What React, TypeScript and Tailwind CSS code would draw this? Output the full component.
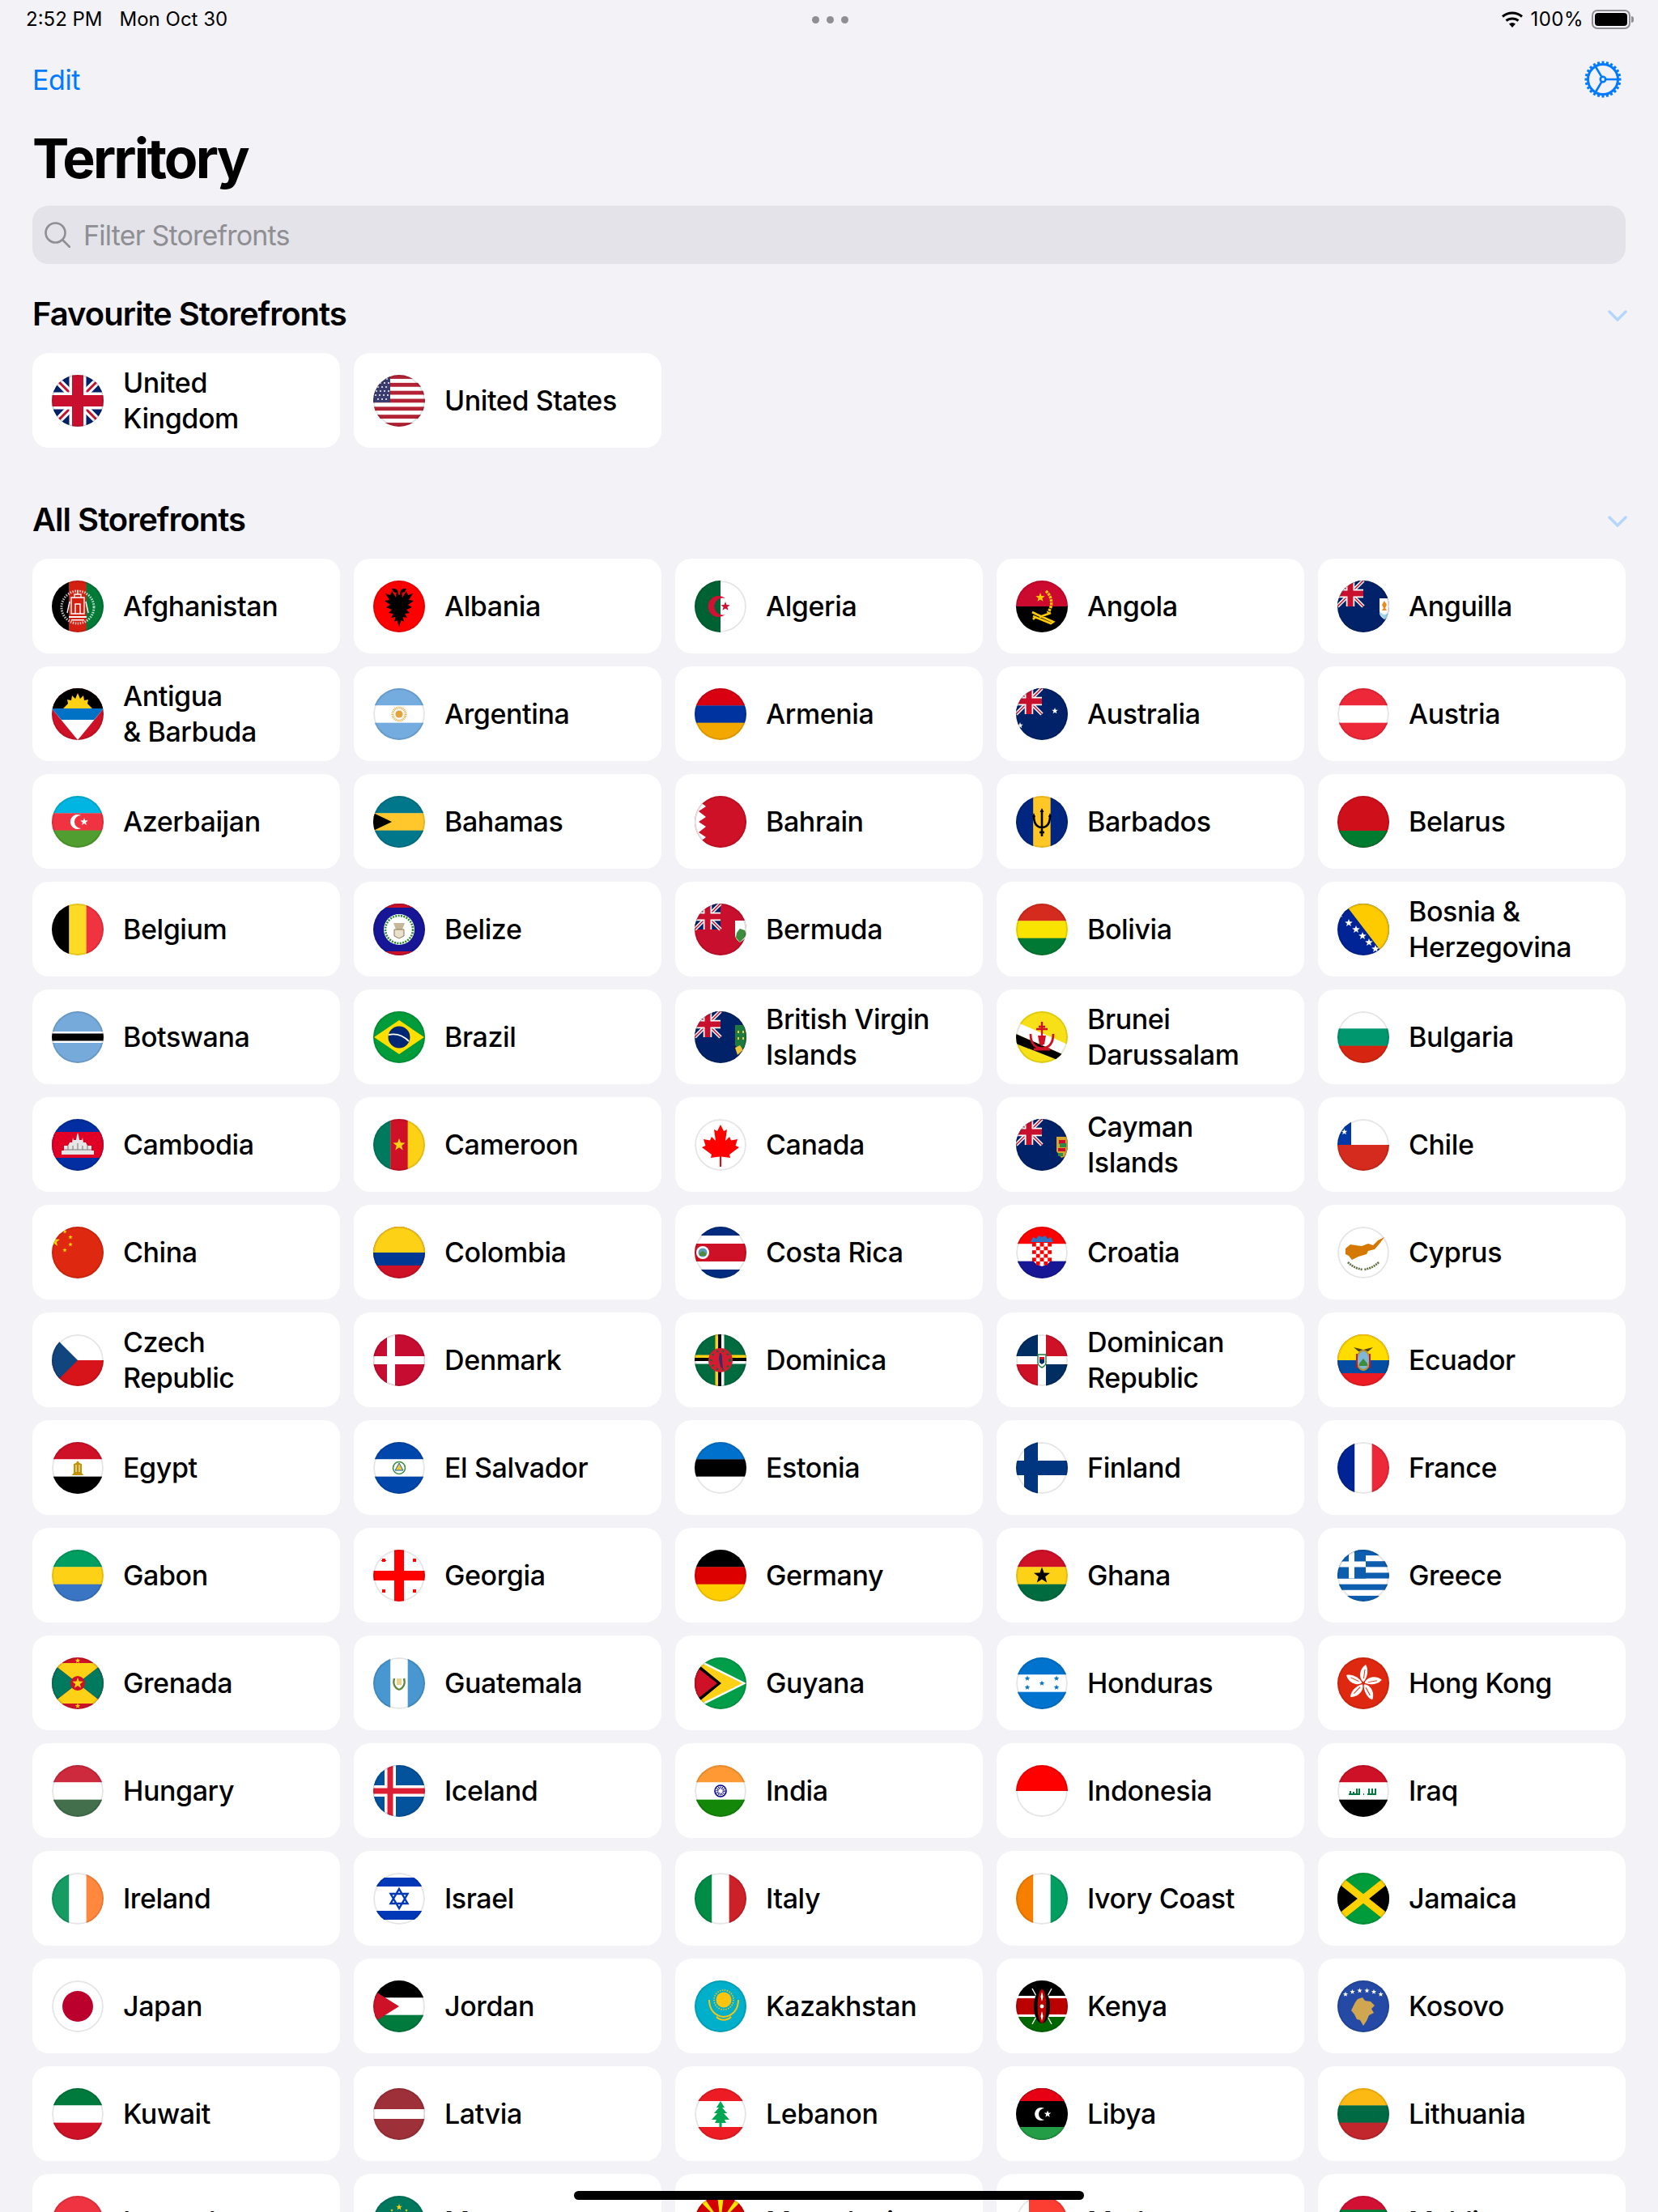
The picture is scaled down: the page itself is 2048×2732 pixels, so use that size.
import type { ReactNode } from "react";

// ---- flag drawing helpers (all flags live in a 64x64 box) ----

const H = (...c: string[]) =>
  c.map((f, i) => <rect key={i} x="0" y={(i * 64) / c.length} width="64" height={64 / c.length + 0.3} fill={f} />);

const V = (...c: string[]) =>
  c.map((f, i) => <rect key={i} y="0" x={(i * 64) / c.length} height="64" width={64 / c.length + 0.3} fill={f} />);

const Bg = ({ c }: { c: string }) => <rect width="64" height="64" fill={c} />;

function Star({ x, y, r, fill = "#fff" }: { x: number; y: number; r: number; fill?: string }) {
  const pts = Array.from({ length: 10 }, (_, i) => {
    const a = -Math.PI / 2 + (i * Math.PI) / 5;
    const d = i % 2 === 0 ? r : r * 0.42;
    return `${(x + d * Math.cos(a)).toFixed(2)},${(y + d * Math.sin(a)).toFixed(2)}`;
  });
  return <polygon points={pts.join(" ")} fill={fill} />;
}

const Jack = () => (
  <>
    <Bg c="#012169" />
    <path d="M0 0L64 64M64 0L0 64" stroke="#fff" strokeWidth="9" />
    <path d="M0 0L64 64M64 0L0 64" stroke="#c8102e" strokeWidth="3" />
    <path d="M32 0V64M0 32H64" stroke="#fff" strokeWidth="21" />
    <path d="M32 0V64M0 32H64" stroke="#c8102e" strokeWidth="14" />
  </>
);

const Canton = () => (
  <g transform="scale(.5)">
    <Jack />
  </g>
);

const Ensign = ({ children }: { children?: ReactNode }) => (
  <>
    <Bg c="#012169" />
    <Canton />
    {children}
  </>
);

// ---- data ----

const FAVOURITES: { name: string; flag: ReactNode }[] = [
  { name: "United\nKingdom", flag: <Jack /> },
  {
    name: "United States",
    flag: (
      <>
        {Array.from({ length: 13 }, (_, i) => (
          <rect key={i} y={(i * 64) / 13} width="64" height={64 / 13 + 0.2} fill={i % 2 === 0 ? "#b22234" : "#fff"} />
        ))}
        <rect width="21" height="34" fill="#3c3b6e" />
        {[
          [12, 5], [17, 5], [9, 10], [14, 10], [19, 10], [6, 15], [11, 15], [16, 15], [4, 20], [9, 20], [14, 20], [19, 20],
          [3, 25], [8, 25], [13, 25], [18, 25], [6, 30], [11, 30], [16, 30],
        ].map(([x, y]) => (
          <circle key={`${x}-${y}`} cx={x} cy={y} r="1" fill="#fff" />
        ))}
      </>
    ),
  },
];

const STOREFRONTS: { name: string; flag: ReactNode }[] = [
  {
    name: "Afghanistan",
    flag: (
      <>
        {V("#000", "#d32011", "#007a36")}
        <circle cx="32" cy="33" r="20" fill="none" stroke="#fff" strokeOpacity=".75" strokeWidth="3" strokeDasharray="1.5 1.5" />
        <path d="M24 21h16v20H24z" fill="none" stroke="#fff" strokeWidth="1.4" />
        <path d="M28 21v-4h8v4M32 17v-5M29 41V29h6v12M22 26l-3 14M42 26l3 14" fill="none" stroke="#fff" strokeWidth="1.4" />
        <path d="M21 44h22v2H21zM24 48h16v1.5H24z" fill="#fff" />
      </>
    ),
  },
  {
    name: "Albania",
    flag: (
      <>
        <Bg c="#ff0000" />
        <path
          d="M32 57L29.500 49L26 51L27.500 45L22 46L25 41L19 40L23 36L16 33L21 30L14 25L20 24L15 16L21 18L23 13L28 21L28.500 15L25 14L23 10L27 10L30 12L31.500 18L32.500 18L34 12L37 10L41 10L39 14L35.500 15L36 21L41 13L43 18L49 16L44 24L50 25L43 30L48 33L41 36L45 40L39 41L42 46L36.500 45L38 51L34.500 49Z"
          fill="#000"
        />
      </>
    ),
  },
  {
    name: "Algeria",
    flag: (
      <>
        <Bg c="#fff" />
        <rect width="32" height="64" fill="#006233" />
        <path d="M38 22A13 13 0 1 0 38 42A10.5 10.5 0 1 1 38 22Z" fill="#d21034" />
        <Star x={38} y={32} r={6} fill="#d21034" />
      </>
    ),
  },
  {
    name: "Angola",
    flag: (
      <>
        {H("#cc092f", "#000")}
        <path d="M37 13A19 19 0 0 1 39 40" fill="none" stroke="#ffcb00" strokeWidth="3.5" strokeDasharray="3 1" />
        <Star x={30} y={21} r={6} fill="#ffcb00" />
        <path d="M20 39l6 3 20 9-3 2-22-9M24 45l-3 3M43 40l-14 5" fill="none" stroke="#ffcb00" strokeWidth="2.6" />
      </>
    ),
  },
  {
    name: "Anguilla",
    flag: (
      <Ensign>
        <path d="M52 22h12v20c-2 3-4 5-6 6-3-2-6-5-6-8z" fill="#fff" />
        <path d="M52 38c2 2 4 4 6 4s4-1 6-3v3l-6 6-6-7z" fill="#9fd3ee" />
        <path d="M58 25l3 5-2 4 2 3h-6l2-3-2-4z" fill="#f08a1d" />
      </Ensign>
    ),
  },
  {
    name: "Antigua\n& Barbuda",
    flag: (
      <>
        <Bg c="#ce1126" />
        <polygon points="0,25 64,25 32,64" fill="#fff" />
        <polygon points="0,25 64,25 52.3,39 11.7,39" fill="#0072c6" />
        <rect width="64" height="25" fill="#000" />
        <path d="M14 25L20 19L19 14L24 15L25 9L29 13L32 6L35 13L39 9L40 15L45 14L44 19L50 25Z" fill="#fcd116" />
      </>
    ),
  },
  {
    name: "Argentina",
    flag: (
      <>
        {H("#74acdf", "#fff", "#74acdf")}
        <circle cx="32" cy="32" r="8" fill="none" stroke="#e9a93b" strokeWidth="3" strokeDasharray="1 1" />
        <circle cx="32" cy="32" r="4.6" fill="#e3a23a" />
      </>
    ),
  },
  { name: "Armenia", flag: H("#d90012", "#0033a0", "#f2a800") },
  {
    name: "Australia",
    flag: (
      <Ensign>
        <Star x={48} y={28} r={4} />
        <Star x={5} y={46} r={4} />
      </Ensign>
    ),
  },
  { name: "Austria", flag: H("#ed2939", "#fff", "#ed2939") },
  {
    name: "Azerbaijan",
    flag: (
      <>
        {H("#00b5e2", "#ef3340", "#509e2f")}
        <path d="M36 24A9 9 0 1 0 36 40A7.5 7.5 0 1 1 36 24Z" fill="#fff" />
        <Star x={40} y={32} r={5} />
      </>
    ),
  },
  {
    name: "Bahamas",
    flag: (
      <>
        {H("#00778b", "#ffc72c", "#00778b")}
        <polygon points="0,21 23,32 0,43" fill="#000" />
      </>
    ),
  },
  {
    name: "Bahrain",
    flag: (
      <>
        <Bg c="#ce1126" />
        <polygon points="0,0 14,0 5,6 14,13 5,19 14,26 5,32 14,38 5,45 14,51 5,58 14,64 0,64" fill="#fff" />
      </>
    ),
  },
  {
    name: "Barbados",
    flag: (
      <>
        {V("#00267f", "#ffc726", "#00267f")}
        <path d="M32 18v32M22 24c0 10 3 15 10 15s10-5 10-15M29 45h6" fill="none" stroke="#000" strokeWidth="2.6" />
        <path d="M32 15l-2.5 5h5zM22 21l-2 5h4zM42 21l-2 5h4z" fill="#000" />
      </>
    ),
  },
  {
    name: "Belarus",
    flag: (
      <>
        <Bg c="#cf101a" />
        <rect y="43" width="64" height="21" fill="#007c30" />
      </>
    ),
  },
  { name: "Belgium", flag: V("#000", "#fdda24", "#ef3340") },
  {
    name: "Belize",
    flag: (
      <>
        <Bg c="#171696" />
        <rect width="64" height="5" fill="#ce1126" />
        <rect y="59" width="64" height="5" fill="#ce1126" />
        <circle cx="32" cy="32" r="19" fill="#fff" />
        <circle cx="32" cy="32" r="17" fill="none" stroke="#2d8a2f" strokeWidth="2.6" strokeDasharray="2 1.4" />
        <path d="M25 24h14l-3 8h-8z" fill="#c6b79a" />
        <path d="M26 32h12v8l-6 3-6-3z" fill="#e9e1cc" stroke="#8b7a55" strokeWidth="1" />
      </>
    ),
  },
  {
    name: "Bermuda",
    flag: (
      <>
        <Bg c="#c8102e" />
        <Canton />
        <path d="M50 21h14v21l-8 6c-4-3-6-6-6-9z" fill="#fff" />
        <path d="M52 36l4-5 6 2 2 6-8 9-5-6z" fill="#3c8d3c" />
      </>
    ),
  },
  { name: "Bolivia", flag: H("#d52b1e", "#f9e300", "#007934") },
  {
    name: "Bosnia &\nHerzegovina",
    flag: (
      <>
        <Bg c="#002395" />
        <polygon points="9,0 64,0 64,64 58,64" fill="#fecb00" />
        {[[3, 13], [14, 24], [23, 32], [31, 40], [39, 48], [47, 56]].map(([x, y]) => (
          <Star key={x} x={x} y={y} r={5} />
        ))}
      </>
    ),
  },
  {
    name: "Botswana",
    flag: (
      <>
        <Bg c="#75aadb" />
        <rect y="25" width="64" height="14" fill="#fff" />
        <rect y="27.5" width="64" height="9" fill="#000" />
      </>
    ),
  },
  {
    name: "Brazil",
    flag: (
      <>
        <Bg c="#009b3a" />
        <polygon points="1,32 32,11 63,32 32,53" fill="#fedf00" />
        <circle cx="32" cy="32" r="13.5" fill="#002776" />
        <path d="M19 29c9-2 18 1 25 8" fill="none" stroke="#fff" strokeWidth="1.8" />
      </>
    ),
  },
  {
    name: "British Virgin\nIslands",
    flag: (
      <Ensign>
        <path d="M50 17h14v25l-7 7-7-7z" fill="#1f7a3d" />
        <path d="M53 24h2v3h-2zM59 24h2v3h-2zM53 32h2v3h-2zM59 32h2v3h-2zM50 45l6-3 4 6-7 6z" fill="#f0c63a" />
      </Ensign>
    ),
  },
  {
    name: "Brunei\nDarussalam",
    flag: (
      <>
        <Bg c="#f7e017" />
        <polygon points="0,13 0,28 64,56 64,41" fill="#fff" />
        <polygon points="0,28 0,40 64,65 64,56" fill="#000" />
        <path d="M32 13v30M25 22h14M28 19h8" fill="none" stroke="#cf1126" strokeWidth="2.4" />
        <path d="M18 28c0 10 4 17 14 18 10-1 14-8 14-18M22 47h20" fill="none" stroke="#cf1126" strokeWidth="2.8" />
        <path d="M27 30h10l-2 11h-6z" fill="#cf1126" />
      </>
    ),
  },
  { name: "Bulgaria", flag: H("#fff", "#00966e", "#d62612") },
  {
    name: "Cambodia",
    flag: (
      <>
        <rect width="64" height="64" fill="#032ea1" />
        <rect y="16" width="64" height="32" fill="#e00025" />
        <path d="M12 44h40v-5h-3v-6h-5l-2-4h-3l-1-6-1 3h-3l-1-6-1-3-1 3-1 6h-3l-1-3-1 6h-3l-2 4h-5v6h-3z" fill="#e6e6e6" />
        <path d="M15 38h34M20 33v5M26 33v5M32 30v8M38 33v5M44 33v5" stroke="#777" strokeWidth="1" />
      </>
    ),
  },
  {
    name: "Cameroon",
    flag: (
      <>
        {V("#007a5e", "#ce1126", "#fcd116")}
        <Star x={32} y={32} r={8} fill="#fcd116" />
      </>
    ),
  },
  {
    name: "Canada",
    flag: (
      <>
        <Bg c="#fff" />
        <polygon
          points="32,7 36,15 40,13 38,27 43,22 45,26.5 53,25 50.5,33 55,35 43,44 44,48 33,46.5 33,59 31,59 31,46.5 20,48 21,44 9,35 13.5,33 11,25 19,26.5 21,22 26,27 24,13 28,15"
          fill="#ff0000"
        />
      </>
    ),
  },
  {
    name: "Cayman\nIslands",
    flag: (
      <Ensign>
        <path d="M50 22h14v14l-2 10-6 2-6-8z" fill="#d8a52d" />
        <path d="M53 26h8v5h-8zM52 36h9v4h-9z" fill="#c8102e" />
        <path d="M54 30h8v5h-8zM52 42h6v4h-6z" fill="#2a8b4a" />
      </Ensign>
    ),
  },
  {
    name: "Chile",
    flag: (
      <>
        <Bg c="#fff" />
        <rect y="32" width="64" height="32" fill="#d52b1e" />
        <rect width="17" height="32" fill="#0039a6" />
        <Star x={8.5} y={16} r={4} />
      </>
    ),
  },
  {
    name: "China",
    flag: (
      <>
        <Bg c="#de2910" />
        <Star x={3} y={18} r={7} fill="#ffde00" />
        <Star x={16} y={6} r={2.8} fill="#ffde00" />
        <Star x={23} y={13} r={2.8} fill="#ffde00" />
        <Star x={23} y={22} r={2.8} fill="#ffde00" />
        <Star x={16} y={29} r={2.8} fill="#ffde00" />
      </>
    ),
  },
  {
    name: "Colombia",
    flag: (
      <>
        <Bg c="#ce1126" />
        <rect width="64" height="32" fill="#fcd116" />
        <rect y="32" width="64" height="16" fill="#003893" />
      </>
    ),
  },
  {
    name: "Costa Rica",
    flag: (
      <>
        <Bg c="#fff" />
        <rect width="64" height="11" fill="#002b7f" />
        <rect y="53" width="64" height="11" fill="#002b7f" />
        <rect y="21" width="64" height="22" fill="#ce1126" />
        <circle cx="10" cy="32" r="8" fill="#fff" />
        <circle cx="10" cy="32" r="5.5" fill="#5b9bb5" />
        <path d="M6 33l4-3 4 3v3H6z" fill="#4d8a3f" />
      </>
    ),
  },
  {
    name: "Croatia",
    flag: (
      <>
        {H("#ff0000", "#fff", "#171796")}
        <path d="M18 19l3-6 4 2 3-4 4 2 4-2 3 4 4-2 3 6z" fill="#2d74c4" />
        <path d="M20 20h24v17c0 7-6 10-12 12-6-2-12-5-12-12z" fill="#fff" />
        {[0, 1, 2, 3, 4, 5].map((r) =>
          [0, 1, 2, 3, 4].map((c) =>
            (r + c) % 2 === 0 ? (
              <rect key={`${r}${c}`} x={20 + c * 4.8} y={20 + r * 4.6} width="4.8" height="4.6" fill="#f00" />
            ) : null
          )
        )}
      </>
    ),
  },
  {
    name: "Cyprus",
    flag: (
      <>
        <Bg c="#fff" />
        <path d="M10 27L16 22L22 23L30 24L38 21L44 23L50 17L58 13L52 21L46 28L38 30L36 34L26 37L18 41L14 36L10 34Z" fill="#d57800" />
        <path d="M13 44c6 6 12 8 18 9M51 44c-6 6-12 8-18 9" fill="none" stroke="#5f6f3f" strokeWidth="2.6" strokeDasharray="2 1" />
      </>
    ),
  },
  {
    name: "Czech\nRepublic",
    flag: (
      <>
        <Bg c="#fff" />
        <rect y="32" width="64" height="32" fill="#d7141a" />
        <polygon points="0,0 32,32 0,64" fill="#11457e" />
      </>
    ),
  },
  {
    name: "Denmark",
    flag: (
      <>
        <Bg c="#c60c30" />
        <path d="M17 0h10v64H17zM0 27h64v10H0z" fill="#fff" />
      </>
    ),
  },
  {
    name: "Dominica",
    flag: (
      <>
        <Bg c="#006b3f" />
        <path d="M25.5 0h3.500v64h-3.500zM0 25.500h64v3.500H0z" fill="#fcd116" />
        <path d="M29 0h4v64h-4zM0 29h64v4H0z" fill="#000" />
        <path d="M33 0h3.500v64H33zM0 33h64v3.500H0z" fill="#fff" />
        <circle cx="32" cy="32" r="15" fill="#d41c30" />
        <circle cx="32" cy="32" r="11.500" fill="none" stroke="#006b3f" strokeWidth="2.400" strokeDasharray="2 5" />
        <path d="M31 23c3 0 3 4 3 8l1 12-3-3-2-10z" fill="#3b2a6b" />
      </>
    ),
  },
  {
    name: "Dominican\nRepublic",
    flag: (
      <>
        <Bg c="#fff" />
        <rect width="27" height="27" fill="#002d62" />
        <rect x="37" width="27" height="27" fill="#ce1126" />
        <rect y="37" width="27" height="27" fill="#ce1126" />
        <rect x="37" y="37" width="27" height="27" fill="#002d62" />
        <path d="M27 25h10v10c0 3-3 5-5 6-2-1-5-3-5-6z" fill="#fff" stroke="#1f7a3d" strokeWidth="1.400" />
        <path d="M29 28h6v3h-6z" fill="#ce1126" />
        <path d="M29 31h6v4l-3 2-3-2z" fill="#002d62" />
      </>
    ),
  },
  {
    name: "Ecuador",
    flag: (
      <>
        <Bg c="#ed1c24" />
        <rect width="64" height="32" fill="#ffdd00" />
        <rect y="32" width="64" height="16" fill="#034ea2" />
        <path d="M20 16l12 3 12-3-6 5h-12z" fill="#4a3a28" />
        <ellipse cx="32" cy="32" rx="8" ry="12" fill="#7fb7d6" stroke="#b8932f" strokeWidth="2" />
        <path d="M27 36l5-6 5 6v3h-10z" fill="#3c8d3c" />
        <path d="M24 24v18M40 24v18" stroke="#c8102e" strokeWidth="1.800" />
      </>
    ),
  },
  { name: "Egypt", flag: <>{H("#ce1126", "#fff", "#000")}<path d="M32 23l2 3 3 1v11l2 3h-14l2-3V27l3-1z" fill="#c09300" /><path d="M30 28v9M34 28v9" stroke="#fff" strokeWidth="1" /></> },
  {
    name: "El Salvador",
    flag: (
      <>
        {H("#0047ab", "#fff", "#0047ab")}
        <circle cx="32" cy="32" r="7.500" fill="none" stroke="#3c8d3c" strokeWidth="1.600" />
        <polygon points="32,26 37,35 27,35" fill="#e9c93a" stroke="#1b5fa8" strokeWidth="1" />
      </>
    ),
  },
  { name: "Estonia", flag: H("#0072ce", "#000", "#fff") },
  {
    name: "Finland",
    flag: (
      <>
        <Bg c="#fff" />
        <path d="M10 0h17v64H10zM0 23h64v18H0z" fill="#003580" />
      </>
    ),
  },
  { name: "France", flag: V("#002395", "#fff", "#ed2939") },
  { name: "Gabon", flag: H("#009e60", "#fcd116", "#3a75c4") },
  {
    name: "Georgia",
    flag: (
      <>
        <Bg c="#fff" />
        <path d="M26 0h12v64H26zM0 26h64v12H0z" fill="#ff0000" />
        <path d="M11 11h4v4h-4zM10 13h6v1h-6zM49 11h4v4h-4zM11 49h4v4h-4zM49 49h4v4h-4z" fill="#ff0000" />
      </>
    ),
  },
  { name: "Germany", flag: H("#000", "#dd0000", "#ffce00") },
  {
    name: "Ghana",
    flag: (
      <>
        {H("#ce1126", "#fcd116", "#006b3f")}
        <Star x={32} y={32} r={10.500} fill="#000" />
      </>
    ),
  },
  {
    name: "Greece",
    flag: (
      <>
        <Bg c="#fff" />
        {[0, 2, 4, 6, 8].map((i) => (
          <rect key={i} y={(i * 64) / 9} width="64" height={64 / 9} fill="#0d5eaf" />
        ))}
        <rect width="35" height="35.500" fill="#0d5eaf" />
        <path d="M14 0h7v35.500h-7zM0 14.500h35v7H0z" fill="#fff" />
      </>
    ),
  },
  {
    name: "Grenada",
    flag: (
      <>
        <Bg c="#ce1126" />
        <polygon points="0,7 64,7 32,32" fill="#fcd116" />
        <polygon points="0,57 64,57 32,32" fill="#fcd116" />
        <polygon points="0,7 32,32 0,57" fill="#007a5e" />
        <polygon points="64,7 32,32 64,57" fill="#007a5e" />
        <circle cx="32" cy="32" r="9" fill="#ce1126" />
        <Star x={32} y={32} r={7} fill="#fcd116" />
        <Star x={32} y={4} r={3.400} fill="#fcd116" />
        <Star x={32} y={60} r={3.400} fill="#fcd116" />
      </>
    ),
  },
  {
    name: "Guatemala",
    flag: (
      <>
        {V("#4997d0", "#fff", "#4997d0")}
        <path d="M26 26c-2 7 1 12 6 14M38 26c2 7-1 12-6 14" fill="none" stroke="#5b8a3a" strokeWidth="2.400" />
        <rect x="29" y="26" width="6" height="8" fill="#e8d690" />
      </>
    ),
  },
  {
    name: "Guyana",
    flag: (
      <>
        <Bg c="#009e49" />
        <polygon points="0,0 64,32 0,64" fill="#fff" />
        <polygon points="0,3 59,32 0,61" fill="#fcd116" />
        <polygon points="0,5 33,32 0,59" fill="#000" />
        <polygon points="0,10 28,32 0,54" fill="#ce1126" />
      </>
    ),
  },
  {
    name: "Honduras",
    flag: (
      <>
        {H("#0073cf", "#fff", "#0073cf")}
        {[[32, 32], [14, 26], [14, 37], [50, 26], [50, 37]].map(([x, y]) => (
          <Star key={`${x}${y}`} x={x} y={y} r={3.500} fill="#0073cf" />
        ))}
      </>
    ),
  },
  {
    name: "Hong Kong",
    flag: (
      <>
        <Bg c="#de2910" />
        {[0, 72, 144, 216, 288].map((a) => (
          <g key={a} transform={`rotate(${a} 32 32)`}>
            <path d="M31.500 30C26 25 27 14 35 9C39 15 37 25 32.500 30Z" fill="#fff" />
            <path d="M34 15L32.500 26" stroke="#de2910" strokeWidth="1" />
          </g>
        ))}
      </>
    ),
  },
  { name: "Hungary", flag: H("#cd2a3e", "#fff", "#436f4d") },
  {
    name: "Iceland",
    flag: (
      <>
        <Bg c="#02529c" />
        <path d="M14 0h14v64H14zM0 25h64v14H0z" fill="#fff" />
        <path d="M17.500 0h7v64h-7zM0 28.500h64v7H0z" fill="#dc1e35" />
      </>
    ),
  },
  {
    name: "India",
    flag: (
      <>
        {H("#ff9933", "#fff", "#138808")}
        <circle cx="32" cy="32" r="7" fill="none" stroke="#000088" strokeWidth="1.600" />
        <circle cx="32" cy="32" r="4" fill="none" stroke="#000088" strokeWidth="3" strokeDasharray="1 1" />
      </>
    ),
  },
  {
    name: "Indonesia",
    flag: (
      <>
        <Bg c="#fff" />
        <rect width="64" height="32" fill="#ff0000" />
      </>
    ),
  },
  {
    name: "Iraq",
    flag: (
      <>
        {H("#ce1126", "#fff", "#000")}
        <path d="M14 36h14M16 36v-4M20 36v-3M24 36v-7M27 36v-7M32 36h1M37 36h11M39 36v-7M43 36v-7M47 36v-7" fill="none" stroke="#007a3d" strokeWidth="2" />
      </>
    ),
  },
  { name: "Ireland", flag: V("#169b62", "#fff", "#ff883e") },
  {
    name: "Israel",
    flag: (
      <>
        <Bg c="#fff" />
        <rect y="6" width="64" height="11" fill="#0038b8" />
        <rect y="47" width="64" height="11" fill="#0038b8" />
        <path d="M32 20L42.500 38H21.500ZM32 44L21.500 26H42.500Z" fill="none" stroke="#0038b8" strokeWidth="2.400" />
      </>
    ),
  },
  { name: "Italy", flag: V("#008c45", "#fff", "#cd212a") },
  { name: "Ivory Coast", flag: V("#f77f00", "#fff", "#009e60") },
  {
    name: "Jamaica",
    flag: (
      <>
        <Bg c="#009b3a" />
        <polygon points="0,8 26,32 0,56" fill="#000" />
        <polygon points="64,8 38,32 64,56" fill="#000" />
        <path d="M-2 5L66 59M66 5L-2 59" stroke="#fed100" strokeWidth="9" />
      </>
    ),
  },
  {
    name: "Japan",
    flag: (
      <>
        <Bg c="#fff" />
        <circle cx="32" cy="32" r="19" fill="#bc002d" />
      </>
    ),
  },
  {
    name: "Jordan",
    flag: (
      <>
        {H("#000", "#fff", "#007a3d")}
        <polygon points="0,12 32,32 0,52" fill="#ce1126" />
      </>
    ),
  },
  {
    name: "Kazakhstan",
    flag: (
      <>
        <Bg c="#00afca" />
        <circle cx="36" cy="24" r="9.500" fill="#fec50c" />
        <circle cx="36" cy="24" r="12" fill="none" stroke="#fec50c" strokeWidth="1.600" strokeDasharray="1.500 1.500" />
        <path d="M18 24c0 12 7 20 18 21M54 24c0 12-7 20-18 21M27 45c5 5 13 5 18 0" fill="none" stroke="#fec50c" strokeWidth="2" />
      </>
    ),
  },
  {
    name: "Kenya",
    flag: (
      <>
        <Bg c="#fff" />
        <rect width="64" height="19" fill="#000" />
        <rect y="22" width="64" height="20" fill="#bb0000" />
        <rect y="45" width="64" height="19" fill="#006600" />
        <path d="M20 10L44 54M44 10L20 54" stroke="#fff" strokeWidth="1.400" />
        <ellipse cx="32" cy="32" rx="10" ry="21" fill="#000" />
        <ellipse cx="32" cy="32" rx="5.500" ry="21" fill="#bb0000" />
        <path d="M32 14l1.500 6-1.500 6-1.500-6zM32 38l1.500 6-1.500 6-1.500-6z" fill="#fff" />
        <circle cx="32" cy="32" r="2.400" fill="#fff" />
      </>
    ),
  },
  {
    name: "Kosovo",
    flag: (
      <>
        <Bg c="#244aa5" />
        <path d="M25 23L31 21L34 25L41 26L46 31L42 35L45 40L39 43L36 50L32 56L28 49L24 48L21 42L17 37L20 31L22 27Z" fill="#d0a650" />
        {[[10, 17], [18.500, 14], [27.500, 12.500], [36.500, 12.500], [45, 14], [53.500, 17]].map(([x, y]) => (
          <Star key={x} x={x} y={y} r={3.300} />
        ))}
      </>
    ),
  },
  { name: "Kuwait", flag: H("#007a3d", "#fff", "#ce1126") },
  {
    name: "Latvia",
    flag: (
      <>
        <Bg c="#9e3039" />
        <rect y="26" width="64" height="12" fill="#fff" />
      </>
    ),
  },
  {
    name: "Lebanon",
    flag: (
      <>
        <Bg c="#fff" />
        <rect width="64" height="16" fill="#ed1c24" />
        <rect y="48" width="64" height="16" fill="#ed1c24" />
        <path d="M32 16l5 8h-3l6 7h-4l7 8h-6l2 4H25l2-4h-6l7-8h-4l6-7h-3z" fill="#00a651" />
        <rect x="30.500" y="43" width="3" height="5" fill="#00a651" />
      </>
    ),
  },
  {
    name: "Libya",
    flag: (
      <>
        <Bg c="#000" />
        <rect width="64" height="16" fill="#e70013" />
        <rect y="48" width="64" height="16" fill="#239e46" />
        <path d="M35 25A8 8 0 1 0 35 39A6.500 6.500 0 1 1 35 25Z" fill="#fff" />
        <Star x={39} y={32} r={4.500} />
      </>
    ),
  },
  { name: "Lithuania", flag: H("#fdb913", "#006a44", "#c1272d") },
  { name: "Luxembourg", flag: H("#ef3340", "#fff", "#00a3e0") },
  {
    name: "Macao",
    flag: (
      <>
        <Bg c="#00785e" />
        <Star x={32} y={14} r={4} fill="#fbd116" />
        <Star x={23} y={18} r={2} fill="#fbd116" />
        <Star x={41} y={18} r={2} fill="#fbd116" />
        <path d="M24 28c3-4 5-4 8 0 3-4 5-4 8 0l-8 12z" fill="#fff" />
      </>
    ),
  },
  {
    name: "Macedonia",
    flag: (
      <>
        <Bg c="#d20000" />
        <path d="M28 0h8l-4 32zM0 0l32 32L10 0zM64 0L32 32L54 0zM0 26h32v12H0zM32 26h32v12H32z" fill="#ffe600" />
        <circle cx="32" cy="32" r="8" fill="#ffe600" />
      </>
    ),
  },
  {
    name: "Madagascar",
    flag: (
      <>
        <Bg c="#fff" />
        <rect x="16" width="48" height="32" fill="#fc3d32" />
        <rect x="16" y="32" width="48" height="32" fill="#007e3a" />
      </>
    ),
  },
  {
    name: "Maldives",
    flag: (
      <>
        <Bg c="#d21034" />
        <rect y="17" width="64" height="30" fill="#007e3a" />
      </>
    ),
  },
];

// ---- status bar / toolbar glyphs ----

function Wifi() {
  return (
    <svg viewBox="0 0 28 20" className="w-7 h-5">
      <path d="M14 20L10 15.500C12.500 13.500 15.500 13.500 18 15.500Z" />
      <path d="M2 6.500C9 .5 19 .5 26 6.500" fill="none" stroke="#000" strokeWidth="3" />
      <path d="M6.500 11.500C10.500 8 17.500 8 21.500 11.500" fill="none" stroke="#000" strokeWidth="3" />
    </svg>
  );
}

function Battery() {
  return (
    <div className="flex items-center">
      <div className="w-12 h-6 rounded-[7px] border-2 border-[#8e8e93] p-[2px]">
        <div className="w-full h-full rounded-[4px] bg-black" />
      </div>
      <div className="w-[3px] h-2 ml-[1px] rounded-r-full bg-[#8e8e93]" />
    </div>
  );
}

function Gear() {
  const teeth = Array.from({ length: 24 }, (_, i) => i * 15);
  return (
    <svg viewBox="0 0 46 46" className="w-[46px] h-[46px] mr-[5px]" fill="none" stroke="#007aff">
      <circle cx="23" cy="23" r="18.500" strokeWidth="3" />
      {teeth.map((a) => (
        <path key={a} d="M23 4V0.500" strokeWidth="3" transform={`rotate(${a} 23 23)`} />
      ))}
      <circle cx="23" cy="23" r="3.200" strokeWidth="2.600" />
      <path d="M26 23H41M21.500 25.800L14 38.500M21.500 20.200L14 7.500" strokeWidth="2.600" />
    </svg>
  );
}

function Chevron() {
  return (
    <svg viewBox="0 0 24 14" className="w-6 h-3.5 mr-[-2px] mt-[6px]" fill="none" stroke="#b5d6fb" strokeWidth="3.500" strokeLinecap="round">
      <path d="M2 2L12 12L22 2" />
    </svg>
  );
}

// ---- page ----

function Flag({ children }: { children: ReactNode }) {
  return (
    <svg viewBox="0 0 64 64" className="w-16 h-16 shrink-0 rounded-full overflow-hidden">
      {children}
      <circle cx="32" cy="32" r="31" fill="none" stroke="#000" strokeOpacity=".1" strokeWidth="2" />
    </svg>
  );
}

function Card({ name, flag }: { name: string; flag: ReactNode }) {
  return (
    <div className="h-[117px] flex items-center gap-6 pl-6 rounded-[20px] bg-white">
      <Flag>{flag}</Flag>
      <span className="whitespace-pre-line text-[34px] leading-[44px] font-medium text-black tracking-[-0.4px]">{name}</span>
    </div>
  );
}

function SectionHeader({ title }: { title: string }) {
  return (
    <div className="h-[62px] mb-[18px] flex items-center justify-between">
      <h2 className="pt-[2px] text-[40px] font-semibold text-black tracking-[-1px]">{title}</h2>
      <Chevron />
    </div>
  );
}

export default function App() {
  return (
    <div className="relative h-[2732px] overflow-hidden bg-[#f2f2f7] font-['Inter','Liberation_Sans',sans-serif] text-black">
      {/* Status bar */}
      <div className="h-12 pl-8 pr-[30px] flex items-center text-[24px]">
        <div className="flex-1 flex gap-[21px]">
          <span>2:52 PM</span>
          <span>Mon Oct 30</span>
        </div>
        <div className="flex gap-[9px]">
          <span className="w-[9px] h-[9px] rounded-full bg-[#8e8e93]" />
          <span className="w-[9px] h-[9px] rounded-full bg-[#8e8e93]" />
          <span className="w-[9px] h-[9px] rounded-full bg-[#8e8e93]" />
        </div>
        <div className="flex-1 flex items-center justify-end gap-2">
          <Wifi />
          <span className="mr-[2px] tracking-[0.5px]">100%</span>
          <Battery />
        </div>
      </div>

      <div className="px-10">
        {/* Nav */}
        <div className="h-[100px] flex items-center justify-between">
          <span className="text-[34px] text-[#007aff] tracking-[-0.4px]">Edit</span>
          <Gear />
        </div>

        <h1 className="h-[106px] pt-[2px] text-[68px] leading-[90px] font-bold tracking-[-2.8px]">Territory</h1>

        {/* Search */}
        <div className="h-[72px] pl-[15px] flex items-center gap-4 rounded-[20px] bg-[#e3e3e9]">
          <svg viewBox="0 0 32 32" className="w-8 h-8" fill="none" stroke="#8e8e93" strokeWidth="2.600" strokeLinecap="round">
            <circle cx="13.500" cy="13.500" r="12" />
            <path d="M22.500 22.500L31 31" />
          </svg>
          <span className="text-[34px] text-[#8e8e93] tracking-[-0.8px]">Filter Storefronts</span>
        </div>

        {/* Favourites */}
        <div className="mt-[30px]">
          <SectionHeader title="Favourite Storefronts" />
          <div className="grid grid-cols-5 gap-x-[17px] gap-y-4">
            {FAVOURITES.map((s) => (
              <Card key={s.name} name={s.name} flag={s.flag} />
            ))}
          </div>
        </div>

        {/* All */}
        <div className="mt-[57px]">
          <SectionHeader title="All Storefronts" />
          <div className="grid grid-cols-5 gap-x-[17px] gap-y-4">
            {STOREFRONTS.map((s) => (
              <Card key={s.name} name={s.name} flag={s.flag} />
            ))}
          </div>
        </div>
      </div>

      {/* Home indicator */}
      <div className="absolute left-[709px] bottom-[15px] w-[630px] h-[11px] rounded-full bg-black" />
    </div>
  );
}
